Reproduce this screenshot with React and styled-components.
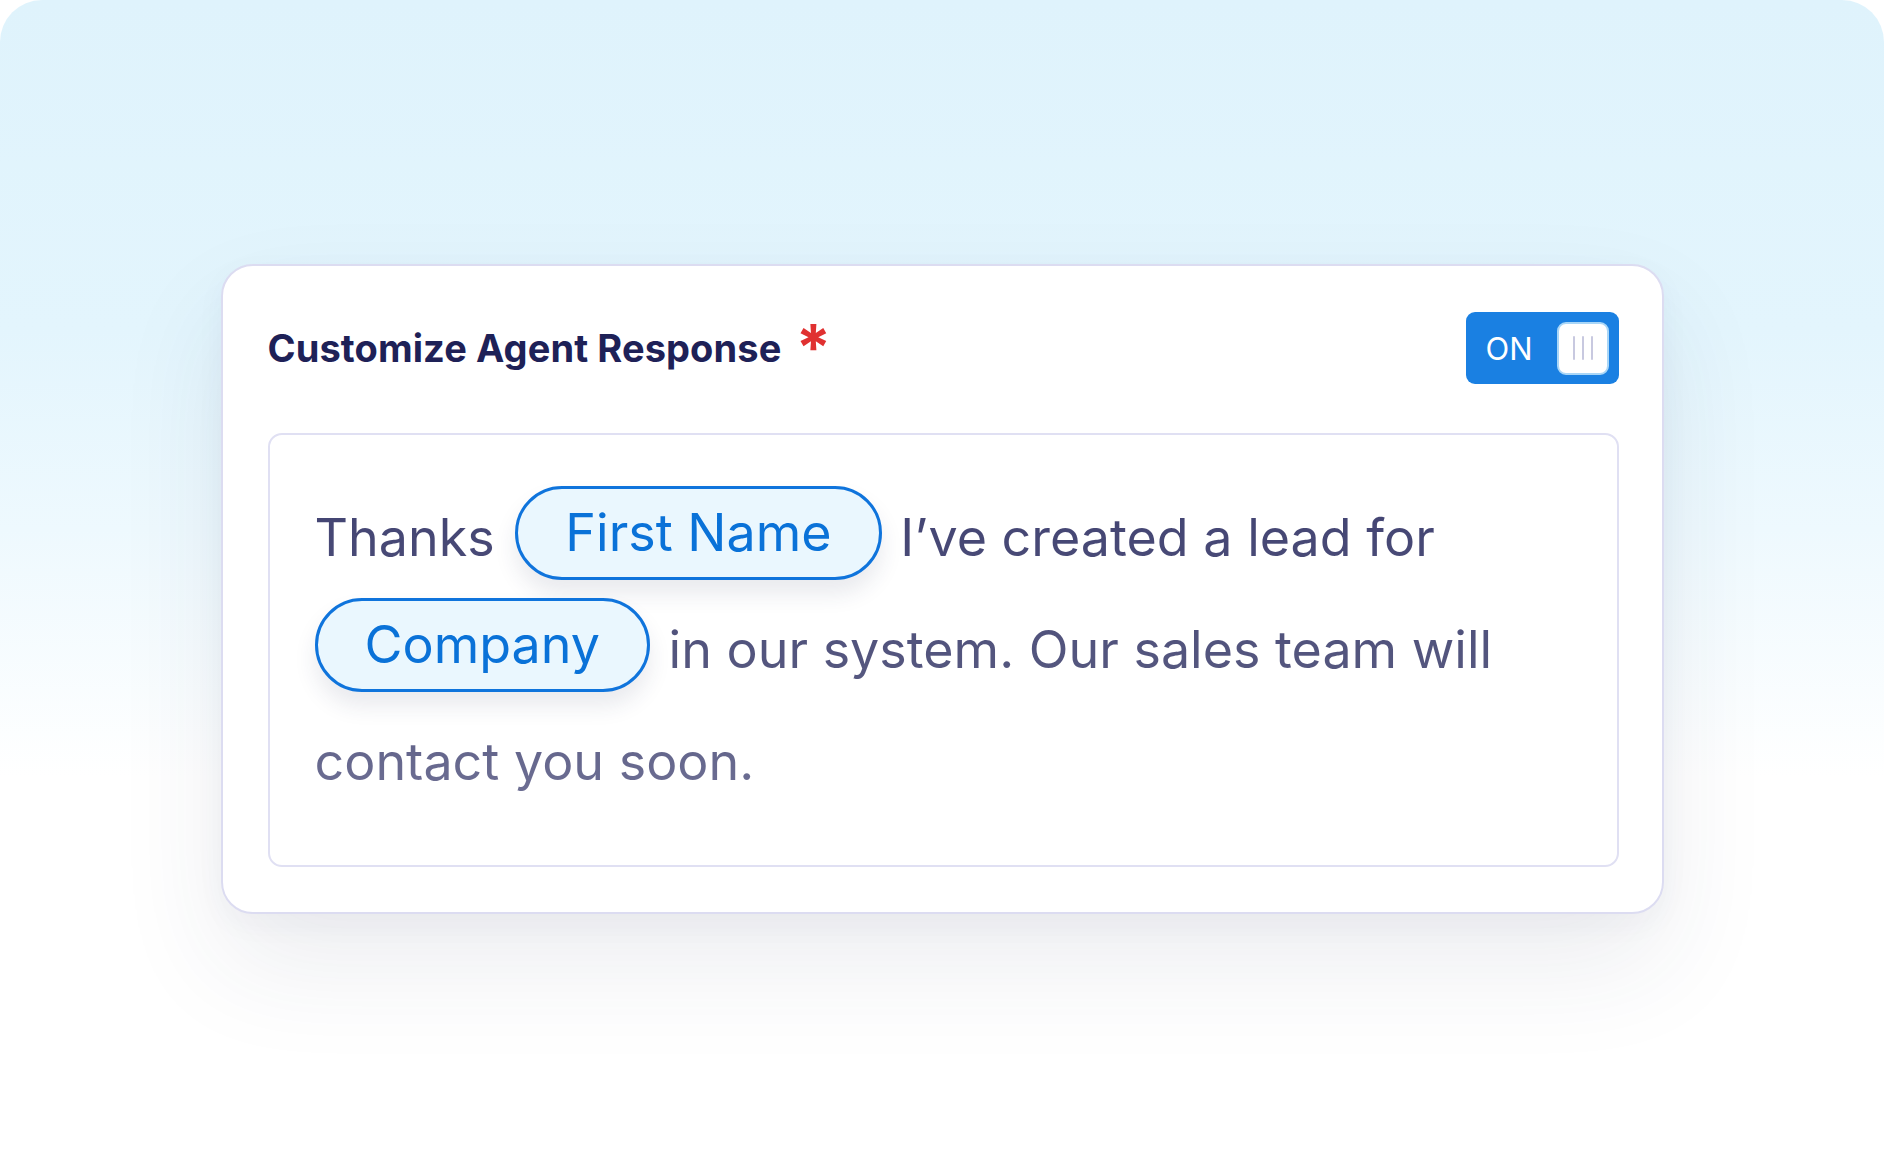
import React from "react";
import styled, { createGlobalStyle } from "styled-components";

const GlobalStyle = createGlobalStyle`
  html, body {
    margin: 0;
    padding: 0;
    background: #fff;
  }
  body {
    font-family: Inter, "Noto Sans", sans-serif;
    -webkit-font-smoothing: antialiased;
  }
`;

const App = () => {
  return (
    <>
      <GlobalStyle />
      <Stage>
        <Card>
          <Header>
            <Title>
              Customize Agent Response
              <Required>*</Required>
            </Title>
            <Toggle>
              <span>ON</span>
              <Knob>
                <i />
                <i />
                <i />
              </Knob>
            </Toggle>
          </Header>
          <Editor>
            Thanks <Chip $lead>First Name</Chip> I’ve created a lead for{" "}
            <Chip>Company</Chip> in our system. Our sales team will contact you
            soon.
          </Editor>
        </Card>
      </Stage>
    </>
  );
};

const Stage = styled.div`
  width: 1884px;
  height: 1176px;
  box-sizing: border-box;
  padding-top: 264px;
  display: flex;
  justify-content: center;
  align-items: flex-start;
  border-radius: 42px 42px 0 0;
  overflow: hidden;
  background: linear-gradient(
    180deg,
    #dff3fc 0%,
    #e3f5fd 28%,
    #eef9fe 45%,
    #ffffff 66%
  );
`;

const Card = styled.div`
  width: 1443px;
  box-sizing: border-box;
  padding: 46px 43px 45px 45px;
  background: #fff;
  border: 2px solid #dcdcf1;
  border-radius: 32px;
  box-shadow: 0 50px 110px rgba(40, 50, 90, 0.09),
    0 10px 30px rgba(40, 50, 90, 0.04);
  display: flex;
  flex-direction: column;
  gap: 49px;
`;

const Header = styled.div`
  display: flex;
  justify-content: space-between;
  align-items: center;
  height: 72px;
`;

const Title = styled.h2`
  margin: 0;
  font-size: 38px;
  line-height: 46px;
  font-weight: 700;
  color: #1e2157;
  letter-spacing: 0.1px;
`;

const Required = styled.span`
  display: inline-block;
  margin-left: 14px;
  color: #e03131;
  font-size: 64px;
  font-weight: 700;
  line-height: 0;
  vertical-align: -9px;
`;

const Toggle = styled.div`
  width: 153px;
  height: 72px;
  box-sizing: border-box;
  padding: 0 10px 0 20px;
  display: flex;
  justify-content: space-between;
  align-items: center;
  background: #1a80e2;
  border-radius: 9px;
  color: #fff;
  font-size: 31px;
  font-weight: 400;
`;

const Knob = styled.div`
  width: 52px;
  height: 53px;
  box-sizing: border-box;
  background: #fff;
  border: 2px solid #a9d6f7;
  border-radius: 9px;
  display: flex;
  justify-content: center;
  align-items: center;
  gap: 7px;

  i {
    width: 2px;
    height: 24px;
    background: #c8c9e0;
    border-radius: 1px;
  }
`;

const Editor = styled.div`
  box-sizing: border-box;
  padding: 47px 45px 47px 45px;
  border: 2px solid #e0e0f3;
  border-radius: 14px;
  font-size: 52px;
  line-height: 112px;
  background: linear-gradient(180deg, #3b3c6d 0%, #55577f 55%, #7b7c9f 100%);
  -webkit-background-clip: text;
  background-clip: text;
  -webkit-text-fill-color: transparent;
  color: transparent;
`;

/* chip text sits a little above the sentence baseline */
const Chip = styled.span`
  display: inline-block;
  box-sizing: border-box;
  height: 94px;
  padding: 14px 47px;
  margin: 0 4px 0 ${(p) => (p.$lead ? "6px" : "0")};
  line-height: 60px;
  vertical-align: 5px;
  border: 3px solid #0f74dc;
  border-radius: 47px;
  background: #eaf7fe;
  color: #0a72d8;
  -webkit-text-fill-color: #0a72d8;
  box-shadow: 0 14px 22px rgba(40, 50, 90, 0.1);
`;

export default App;
